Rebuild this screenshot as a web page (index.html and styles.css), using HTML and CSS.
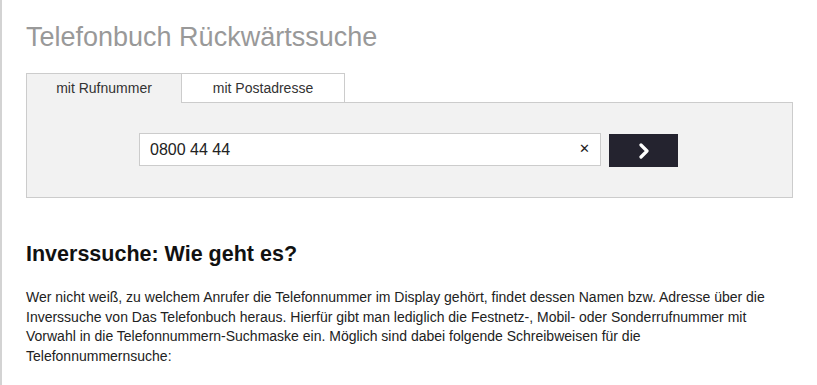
FILE: index.html
```html
<!doctype html>
<html lang="de">

<head>
  <meta charset="UTF-8" />
  <meta name="viewport" content="width=device-width, initial-scale=1.0" />
  <title>Telefonbuch Rückwärtssuche</title>
  <link rel="stylesheet" href="styles.css">
</head>

<body>
  <div class="page">
    <h1 class="title">Telefonbuch Rückwärtssuche</h1>

    <div class="tabs">
      <div class="tab active">mit Rufnummer</div>
      <div class="tab">mit Postadresse</div>
    </div>
    <div class="search-panel">
      <div class="search-row">
        <div class="search-field">
          <input type="text" value="0800 44 44" />
          <span class="clear">&#x2715;</span>
        </div>
        <button class="search-btn" type="button">
          <svg width="14" height="16" viewBox="0 0 14 16">
            <path d="M4 2 L10 8 L4 14" fill="none" stroke="#fff" stroke-width="3.2" stroke-linecap="round" stroke-linejoin="round" />
          </svg>
        </button>
      </div>
    </div>

    <h2 class="heading">Inverssuche: Wie geht es?</h2>
    <p class="text">Wer nicht weiß, zu welchem Anrufer die Telefonnummer im Display gehört, findet dessen Namen bzw. Adresse über die
      Inverssuche von Das Telefonbuch heraus. Hierfür gibt man lediglich die Festnetz-, Mobil- oder Sonderrufnummer mit
      Vorwahl in die Telefonnummern-Suchmaske ein. Möglich sind dabei folgende Schreibweisen für die
      Telefonnummernsuche:</p>
  </div>
</body>

</html>
```

FILE: styles.css
```css
body {
  margin: 0;
  font-family: "Liberation Sans", Arial, sans-serif;
  color: #222;
  background: #fff;
}

.page {
  border-left: 2px solid #d3d3d3;
  min-height: 385px;
  box-sizing: border-box;
  padding: 21px 24px 0 24px;
}

.title {
  margin: 0 0 19px;
  font-size: 27px;
  font-weight: normal;
  color: #999;
  line-height: 33px;
}

.tabs {
  display: flex;
}

.tab {
  width: 156px;
  height: 29px;
  line-height: 29px;
  text-align: center;
  font-size: 14px;
  color: #333;
  background: #fff;
  border: 1px solid #ccc;
  border-bottom: none;
  box-sizing: border-box;
  margin-bottom: -1px;
  position: relative;
}

.tab + .tab {
  width: 163px;
  border-left: none;
  border-bottom: 1px solid #ccc;
  height: 30px;
}

.tab.active {
  background: #f2f2f2;
  height: 30px;
  z-index: 1;
}

.search-panel {
  background: #f2f2f2;
  border: 1px solid #ccc;
  height: 96px;
  box-sizing: border-box;
  padding-top: 30px;
}

.search-row {
  display: flex;
  justify-content: center;
  gap: 8px;
  padding-right: 2px;
}

.search-field {
  position: relative;
  width: 462px;
  height: 33px;
}

.search-field input {
  width: 100%;
  height: 100%;
  box-sizing: border-box;
  border: 1px solid #ccc;
  background: #fff;
  padding: 0 30px 0 10px;
  font-family: "Liberation Sans", Arial, sans-serif;
  font-size: 16px;
  color: #222;
  outline: none;
}

.clear {
  position: absolute;
  right: 11px;
  top: 8px;
  font-size: 13px;
  font-weight: bold;
  color: #222;
  font-family: "DejaVu Sans", sans-serif;
}

.search-btn {
  width: 69px;
  height: 33px;
  margin-top: 1px;
  background: #24232f;
  border: none;
  display: flex;
  align-items: center;
  justify-content: center;
  padding: 0;
}

.heading {
  margin: 43px 0 21px;
  font-size: 21.5px;
  font-weight: bold;
  color: #111;
  line-height: 26px;
}

.text {
  margin: 0;
  max-width: 755px;
  font-size: 14px;
  line-height: 19.5px;
  color: #222;
}
```
